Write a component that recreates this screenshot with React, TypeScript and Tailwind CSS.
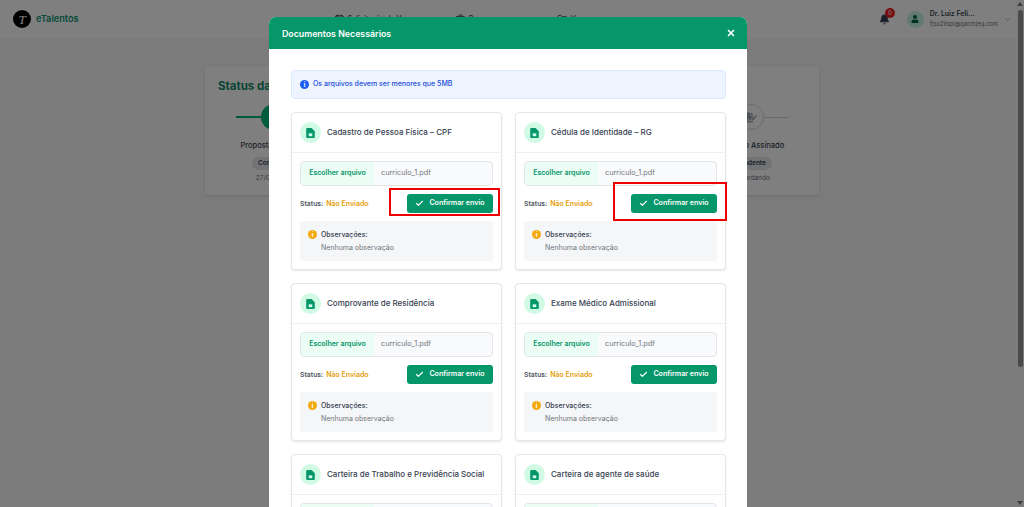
import { Check, ChevronDown, X, Bell, CalendarDays, Briefcase, Folder } from "lucide-react";
import { FaFileSignature, FaUser } from "react-icons/fa";

const DOCS = [
  "Cadastro de Pessoa Física – CPF",
  "Cédula de Identidade – RG",
  "Comprovante de Residência",
  "Exame Médico Admissional",
  "Carteira de Trabalho e Previdência Social",
  "Carteira de agente de saúde",
];

function DocIcon() {
  return (
    <svg viewBox="0 0 12 14" className="h-[10px] w-[9px]" fill="#059669">
      <path d="M1.5 0H7.5L12 4.5V12.5A1.5 1.5 0 0 1 10.5 14H1.5A1.5 1.5 0 0 1 0 12.5V1.5A1.5 1.5 0 0 1 1.5 0Z" />
      <rect x="3.5" y="7.5" width="5" height="4" fill="#d1fae5" />
    </svg>
  );
}

function DocCard({ title }: { title: string }) {
  return (
    <div className="rounded-[4px] border border-[#e5e7eb] bg-white shadow-[0_1px_2px_rgba(0,0,0,0.1)]">
      <div className="flex h-[40px] items-center gap-[6px] border-b border-[#eef0f2] px-[8px]">
        <div className="flex h-[21px] w-[21px] items-center justify-center rounded-full bg-[#d1fae5]">
          <DocIcon />
        </div>
        <span className="whitespace-nowrap pb-[2px] text-[8px] font-medium text-[#374151]">{title}</span>
      </div>
      <div className="flex flex-col gap-[8px] p-[8px]">
        <div className="flex h-[25px] overflow-hidden rounded-[4px] border border-[#e2e5ea] bg-[#f9fafb]">
          <div className="flex w-[73px] items-center justify-center bg-[#ecfdf5] text-[7px] font-semibold text-[#059669]">
            Escolher arquivo
          </div>
          <div className="flex items-center pl-[7px] text-[7.3px] text-[#71757c]">curriculo_1.pdf</div>
        </div>
        <div className="flex h-[19px] items-center justify-between">
          <div className="flex items-center gap-[3px] pt-[1px] text-[7px]">
            <span className="text-[6.8px] font-semibold text-[#4b5563]">Status:</span>
            <span className="font-semibold text-[#e59e0b]">Não Enviado</span>
          </div>
          <button className="flex h-[19px] w-[86px] items-center justify-center gap-[5px] rounded-[3px] bg-[#059669] text-[7.1px] font-semibold text-white">
            <Check className="h-[9px] w-[9px]" strokeWidth={3} />
            Confirmar envio
          </button>
        </div>
        <div className="flex h-[40px] gap-[4px] rounded-[3px] bg-[#f5f6f8] pl-[8px] pt-[9px]">
          <div className="flex h-[9px] w-[9px] items-center justify-center rounded-full bg-[#f1a90b] text-[6px] font-bold leading-none text-white">
            i
          </div>
          <div className="flex flex-col gap-[3px] text-[7px] leading-[10px]">
            <span className="font-medium text-[#374151]">Observações:</span>
            <span className="text-[#71757c]">Nenhuma observação</span>
          </div>
        </div>
      </div>
    </div>
  );
}

function Step({ label, pill, note, done, align }: { label: string; pill: string; note: string; done?: boolean; align: "left" | "right" }) {
  return (
    <div className="flex w-[76px] flex-col items-center whitespace-nowrap">
      <div className="flex w-full items-center">
        <div className={`flex-1 ${done ? "h-[2px] bg-[#00b77f]" : "h-[1px] bg-[#d1d5db]"} ${align === "right" ? "opacity-0" : ""}`} />
        <div className={`flex h-[26px] w-[26px] items-center justify-center rounded-full ${done ? "bg-[#00b77f]" : "border border-[#d1d5db] bg-white text-[#9ca3af]"}`}>
          {!done && <FaFileSignature className="h-[11px] w-[11px]" />}
        </div>
        <div className={`flex-1 ${done ? "h-[2px] bg-[#00b77f]" : "h-[1px] bg-[#d1d5db]"} ${align === "left" ? "opacity-0" : ""}`} />
      </div>
      <span className="mt-[10px] text-[7.5px] font-medium text-[#374151]">{label}</span>
      <span className="mt-[5px] rounded-full bg-[#e5e7eb] px-[6px] py-[2px] text-[6.5px] font-semibold text-[#374151]">{pill}</span>
      <span className="mt-[4px] text-[6.5px] text-[#6b7280]">{note}</span>
    </div>
  );
}

export default function App() {
  return (
    <div className="relative h-screen w-full overflow-hidden bg-[#f6f6f6] font-['Inter',sans-serif]">
      <header className="flex h-[38px] items-center bg-white pl-[13px] pr-[12px]">
        <div className="flex h-[18px] w-[18px] items-center justify-center rounded-full bg-black font-['Liberation_Serif',serif] text-[13px] italic leading-none text-white">
          T
        </div>
        <span className="ml-[5px] text-[9.2px] font-semibold text-[#0e9574]">eTalentos</span>
        <nav className="ml-[255px] flex items-center text-[7px] font-medium text-[#374151]">
          <div className="flex w-[121px] items-center gap-[3px]"><CalendarDays className="h-[11px] w-[11px]" />Solicitação de Vagas</div>
          <div className="flex w-[102px] items-center gap-[3px]"><Briefcase className="h-[11px] w-[11px]" />Processos</div>
          <div className="flex items-center gap-[3px]"><Folder className="h-[11px] w-[11px]" />Vagas</div>
        </nav>
        <div className="relative ml-auto mr-[17px]">
          <Bell className="h-[11px] w-[11px] text-[#374151]" fill="#374151" />
          <span className="absolute -right-[5px] -top-[6px] flex h-[10px] w-[10px] items-center justify-center rounded-full bg-[#ef1c24] text-[6px] leading-none text-white">0</span>
        </div>
        <div className="flex h-[17px] w-[17px] items-center justify-center rounded-full bg-[#c4f5de] text-[#00664a]">
          <FaUser className="h-[8px] w-[8px]" />
        </div>
        <div className="ml-[6px] flex flex-col leading-[10px]">
          <span className="text-[6.9px] font-semibold text-[#374151]">Dr. Luiz Feli...</span>
          <span className="text-[5.9px] text-[#6b7280]">fjsu2iispi@qacmjeq.com</span>
        </div>
        <ChevronDown className="ml-[5px] h-[9px] w-[9px] text-[#9ca3af]" />
      </header>

      <main className="pl-[205px] pr-[205px] pt-[28px]">
        <section className="h-[129px] rounded-[4px] bg-white pl-[13px] pt-[12px] shadow-sm">
          <h2 className="text-[11.5px] font-bold text-[#0f8a68]">Status da Proposta</h2>
          <div className="mt-[9px] flex justify-between pl-[18px] pr-[30px]">
            <Step label="Proposta Assinada" pill="Concluído" note="27/05/2025" done align="left" />
            <Step label="Contrato Assinado" pill="Pendente" note="Aguardando" align="right" />
          </div>
        </section>
      </main>

      {/* backdrop */}
      <div className="absolute inset-0 bg-black/50" />

      {/* page scrollbar */}
      <div className="absolute bottom-0 right-0 top-0 flex w-[8px] flex-col items-center justify-between bg-[#7c7c7c] py-[2px]">
        <svg viewBox="0 0 6 4" className="h-[4px] w-[6px]" fill="#3f3f3f"><path d="M3 0L6 4H0Z" /></svg>
        <div className="absolute left-[1.5px] top-[10px] h-[357px] w-[5px] rounded-full bg-[#4a4a4a]" />
        <svg viewBox="0 0 6 4" className="h-[4px] w-[6px]" fill="#3f3f3f"><path d="M0 0H6L3 4Z" /></svg>
      </div>

      {/* modal */}
      <div className="absolute left-[269px] top-[17px] h-[700px] w-[478px] overflow-hidden rounded-t-[7px] bg-white">
        <div className="flex h-[32px] items-center justify-between bg-[#059669] pl-[13px] pr-[11px] text-white">
          <span className="pt-[1px] text-[8.8px] font-semibold">Documentos Necessários</span>
          <X className="mb-[1px] h-[10px] w-[10px]" strokeWidth={4} />
        </div>
        <div className="flex flex-col gap-[13px] pl-[22px] pr-[21px] pt-[21px]">
          <div className="flex h-[29px] items-center gap-[4px] rounded-[4px] border border-[#dbe8fb] bg-[#eef4ff] pl-[8px] text-[7px] font-medium text-[#1d4ed8]">
            <div className="flex h-[9px] w-[9px] items-center justify-center rounded-full bg-[#1d5cf0] text-[6px] font-bold leading-none text-white">
              i
            </div>
            Os arquivos devem ser menores que 5MB
          </div>
          <div className="grid grid-cols-2 gap-[13px]">
            {DOCS.map((d) => (
              <DocCard key={d} title={d} />
            ))}
          </div>
        </div>
      </div>

      {/* red annotation boxes */}
      <div className="absolute left-[389px] top-[188px] h-[28px] w-[111px] border-2 border-[#ee0000]" />
      <div className="absolute left-[613px] top-[182px] h-[39px] w-[114px] border-2 border-[#ee0000]" />
    </div>
  );
}
